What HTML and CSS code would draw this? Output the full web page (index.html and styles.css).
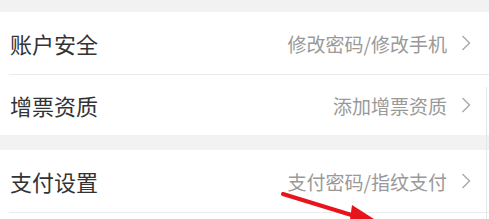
FILE: index.html
```html
<!DOCTYPE html>
<html lang="zh-CN">
<head>
<meta charset="UTF-8">
<meta name="viewport" content="width=device-width, initial-scale=1.0">
<title>设置</title>
<link rel="stylesheet" href="styles.css">
</head>
<body>
<div class="page">
<div class="group">
<div class="row">
<span class="label">账户安全</span>
<span class="value">修改密码/修改手机</span>
<svg class="chev" width="10" height="16" viewBox="0 0 10 16"><polyline points="1.5,1 8.5,8 1.5,15" fill="none" stroke="#a8a8a8" stroke-width="1.4"/></svg>
</div>
<div class="row">
<span class="label">增票资质</span>
<span class="value">添加增票资质</span>
<svg class="chev" width="10" height="16" viewBox="0 0 10 16"><polyline points="1.5,1 8.5,8 1.5,15" fill="none" stroke="#a8a8a8" stroke-width="1.4"/></svg>
</div>
</div>
<div class="group">
<div class="row">
<span class="label">支付设置</span>
<span class="value">支付密码/指纹支付</span>
<svg class="chev" width="10" height="16" viewBox="0 0 10 16"><polyline points="1.5,1 8.5,8 1.5,15" fill="none" stroke="#a8a8a8" stroke-width="1.4"/></svg>
</div>
<div class="row"></div>
</div>
<div class="edge"></div>
<svg class="arrow" width="489" height="219" viewBox="0 0 489 219">
<line x1="283" y1="182" x2="358" y2="205" stroke="#e8141b" stroke-width="4" stroke-linecap="round"/>
<polygon points="352,193 374,207 349,215" fill="#e8141b"/>
</svg>
</div>
</body>
</html>
```

FILE: styles.css
```css
html, body {
margin: 0;
padding: 0;
}

body {
font-family: "Noto Sans CJK SC", "Noto Sans", sans-serif;
background-color: #f2f2f2;
height: 219px;
overflow: hidden;
}

.page {
position: relative;
}

.group {
background-color: #fff;
margin-top: 12px;
padding-left: 9px;
}

.group + .group {
margin-top: 15px;
}

.row {
display: flex;
align-items: center;
height: 62px;
padding-right: 18px;
border-bottom: 1px solid #ebebeb;
}

.group:first-child .row:last-child {
height: 60px;
border-bottom: none;
}

.label {
flex: 1;
padding-left: 1px;
font-size: 22px;
color: #333;
}

.value {
font-size: 19px;
color: #999;
margin-right: 14px;
}

.chev {
display: block;
}

/* faint edge line on the right */
.edge {
position: absolute;
top: 75px;
left: 486px;
width: 1px;
height: 150px;
background-color: #e6e6e6;
}

.arrow {
position: absolute;
top: 0;
left: 0;
}
```
